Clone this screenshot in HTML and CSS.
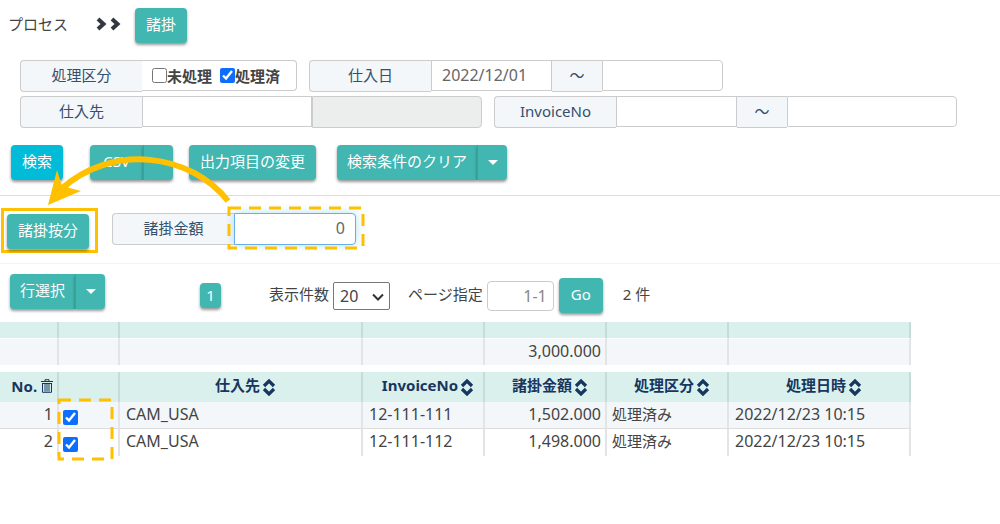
FILE: index.html
```html
<!DOCTYPE html>
<html lang="ja">
<head>
<meta charset="utf-8">
<title>諸掛</title>
<link rel="stylesheet" href="styles.css">
</head>
<body>
<svg class="defs" aria-hidden="true">
  <symbol id="sort" viewBox="0 0 14 18"><path d="M2 8 7 3 12 8M2 11 7 16 12 11" fill="none" stroke="currentColor" stroke-width="3.200"/></symbol>
  <symbol id="chevron" viewBox="0 0 12 14"><path d="M2 2 7.500 7 2 12" fill="none" stroke="currentColor" stroke-width="4"/></symbol>
</svg>

<header class="crumbs">
  <span>プロセス</span>
  <span class="chevrons"><svg><use href="#chevron"/></svg><svg><use href="#chevron"/></svg></span>
  <button class="btn" type="button">諸掛</button>
</header>

<form class="search">
  <div class="fields">
    <div class="group" role="group" aria-labelledby="kubun">
      <span class="tag" id="kubun">処理区分</span>
      <span class="checks">
        <label><input class="tick" type="checkbox">未処理</label>
        <label><input class="tick" type="checkbox" checked>処理済</label>
      </span>
    </div>
    <div class="group">
      <label class="tag" for="date-from">仕入日</label>
      <input class="box" id="date-from" type="text" value="2022/12/01">
      <span class="tilde">～</span>
      <input class="box last" type="text" aria-label="仕入日（終了）">
    </div>
  </div>
  <div class="fields">
    <div class="group">
      <label class="tag" for="supplier">仕入先</label>
      <input class="box wide" id="supplier" type="text">
      <input class="box wide last" type="text" aria-label="仕入先名" disabled>
    </div>
    <div class="group">
      <label class="tag" for="invoice-from">InvoiceNo</label>
      <input class="box" id="invoice-from" type="text">
      <span class="tilde">～</span>
      <input class="box wide last" type="text" aria-label="InvoiceNo（終了）">
    </div>
  </div>
  <div class="actions">
    <button class="btn search-btn" type="button">検索</button>
    <div class="split csv"><button class="btn" type="button">CSV</button><button class="btn toggle" type="button" aria-label="CSVメニュー"></button></div>
    <button class="btn columns" type="button">出力項目の変更</button>
    <div class="split"><button class="btn" type="button">検索条件のクリア</button><button class="btn toggle" type="button" aria-label="クリアメニュー"><span class="caret"></span></button></div>
  </div>
</form>

<section class="allocate">
  <svg class="arrow" viewBox="0 0 200 60" aria-hidden="true">
    <path d="M187 46C150-1 72-13 19 35" fill="none" stroke="#ffc000" stroke-width="6"/>
    <path d="M7 50 16 15 21 31 40 36Z" fill="#ffc000"/>
  </svg>
  <div class="outlined"><button class="btn" type="button">諸掛按分</button></div>
  <div class="group">
    <label class="tag" for="amount">諸掛金額</label>
    <span class="amount">
      <input class="box last" id="amount" type="text" value="0">
      <svg class="dash" aria-hidden="true"><rect x="1" y="1" width="134" height="40"/></svg>
    </span>
  </div>
</section>

<section class="pager">
  <div class="split"><button class="btn" type="button">行選択</button><button class="btn toggle" type="button" aria-label="行選択メニュー"><span class="caret"></span></button></div>
  <div class="paging">
    <button class="btn page" type="button">1</button>
    <label for="count">表示件数</label>
    <span class="select">
      <select id="count"><option>20</option></select>
      <svg viewBox="0 0 12 8"><path d="M1 1.500 6 6.500 11 1.500" fill="none" stroke="#333" stroke-width="2"/></svg>
    </span>
    <label for="jump">ページ指定</label>
    <input class="box last" id="jump" type="text" placeholder="1-1">
    <button class="btn go" type="button">Go</button>
    <span>2 件</span>
  </div>
</section>

<table class="grid sums">
  <colgroup><col class="c1"><col class="c2"><col class="c3"><col class="c4"><col class="c4"><col class="c4"><col class="c7"></colgroup>
  <thead><tr><th></th><th></th><th></th><th></th><th></th><th></th><th></th></tr></thead>
  <tbody><tr><td></td><td></td><td></td><td></td><td class="num">3,000.000</td><td></td><td></td></tr></tbody>
</table>

<div class="results">
  <table class="grid rows">
    <colgroup><col class="c1"><col class="c2"><col class="c3"><col class="c4"><col class="c4"><col class="c4"><col class="c7"></colgroup>
    <thead>
      <tr>
        <th class="num">No. <svg class="trash" viewBox="0 0 12 14"><path d="M0 2.500H12M4 2V.7H8V2M1.500 4V13.300H10.500V4M1.500 4.500H10.500M4 5V12.500M6 5V12.500M8 5V12.500" fill="none" stroke="currentColor" stroke-width="1"/></svg></th>
        <th></th>
        <th>仕入先<svg class="sort"><use href="#sort"/></svg></th>
        <th>InvoiceNo<svg class="sort"><use href="#sort"/></svg></th>
        <th>諸掛金額<svg class="sort"><use href="#sort"/></svg></th>
        <th>処理区分<svg class="sort"><use href="#sort"/></svg></th>
        <th>処理日時<svg class="sort"><use href="#sort"/></svg></th>
      </tr>
    </thead>
    <tbody>
      <tr>
        <td class="num">1</td>
        <td class="pick"><input class="tick" type="checkbox" aria-label="1行目" checked></td>
        <td>CAM_USA</td><td>12-111-111</td><td class="num">1,502.000</td><td class="ja">処理済み</td><td>2022/12/23 10:15</td>
      </tr>
      <tr>
        <td class="num">2</td>
        <td class="pick"><input class="tick" type="checkbox" aria-label="2行目" checked></td>
        <td>CAM_USA</td><td>12-111-112</td><td class="num">1,498.000</td><td class="ja">処理済み</td><td>2022/12/23 10:15</td>
      </tr>
    </tbody>
  </table>
  <svg class="dash" aria-hidden="true"><rect x="1" y="1" width="53" height="59"/></svg>
</div>
</body>
</html>
```
FILE: styles.css
```css
* { box-sizing: border-box; }
body {
  margin: 0;
  min-height: 100vh;
  padding-bottom: 20px;
  background: #fff;
  color: #444;
  font: 15px/20px "Noto Sans", "Noto Sans CJK JP", sans-serif;
}
button, input, select { font: inherit; color: inherit; margin: 0; }
.defs { position: absolute; width: 0; height: 0; }

.btn {
  height: 35px;
  padding: 0 11px 4px;
  border: 0;
  border-radius: 4px;
  background: #42b6b0;
  color: #fff;
  white-space: nowrap;
  box-shadow: 0 2px 3px rgba(0, 0, 0, .4);
}
.split { display: flex; }
.split .btn:first-child { padding: 0 10px 4px; border-radius: 4px 0 0 4px; }
.split .toggle { width: 30px; padding: 0 0 4px; border-left: 1px solid #38a49e; border-radius: 0 4px 4px 0; }
.caret {
  display: inline-block;
  border: 5px solid transparent;
  border-top-color: #fff;
  border-bottom: 0;
  vertical-align: middle;
}

.crumbs { display: flex; align-items: center; padding: 8px 8px 0; }
.crumbs > span { padding-bottom: 3px; }
.chevrons { display: flex; gap: 2px; margin: 0 13px 0 28px; color: #333840; }
.chevrons svg { width: 12px; height: 14px; }

.search { border-bottom: 1px solid #ddd; padding: 17px 0 15px; }
.fields { display: flex; flex-wrap: wrap; gap: 12px; padding: 0 20px; margin-bottom: 4px; }
.group { display: flex; height: 32px; }
.tag {
  width: 122px;
  padding: 4px 0;
  border: 1px solid #ccc;
  border-right: 0;
  border-radius: 4px 0 0 4px;
  background: #f3f7fa;
  color: #34506b;
  text-align: center;
}
.checks {
  display: flex;
  gap: 8px;
  width: 155px;
  height: 31px;
  padding-left: 10px;
  border: 1px solid #ccc;
  border-left: 0;
  border-radius: 0 4px 4px 0;
  font-weight: bold;
}
.checks label { display: flex; align-items: center; white-space: nowrap; }
.tick { width: 15px; height: 15px; accent-color: #0d6efd; }
.box {
  width: 121px;
  min-width: 0;
  height: 31px;
  padding: 0 10px 2px;
  border: 1px solid #ccc;
  background: #fff;
  color: #666;
  font-size: 16px;
}
.wide { width: 170px; }
.last { border-radius: 0 4px 4px 0; }
.box:disabled { height: 32px; background: #eceeee; }
.tilde {
  width: 50px;
  padding: 4px 0;
  border: 1px solid #ccc;
  border-width: 1px 0;
  background: #f3f7fa;
  color: #34506b;
  text-align: center;
}

.actions { display: flex; flex-wrap: wrap; padding: 13px 11px 0; }
.search-btn { margin-right: 27px; background: #00bcd8; }
.csv { margin-right: 16px; }
.csv .btn:first-child { width: 53px; }
.columns { margin-right: 21px; }

.allocate {
  position: relative;
  display: flex;
  align-items: center;
  gap: 14px;
  padding: 12px 1px 10px;
  border-bottom: 1px solid #f4f4f4;
}
.outlined { padding: 3px 6px 1px 3px; border: 3px solid #ffc000; line-height: 0; }
.allocate .group { margin-top: -3px; }
.amount { position: relative; display: flex; }
.amount .box { width: 122px; height: 32px; border-color: #66afe9; text-align: right; box-shadow: 0 0 8px rgba(102, 200, 233, .5); }
.dash { position: absolute; pointer-events: none; overflow: visible; }
.dash rect { fill: none; stroke: #ffc000; stroke-width: 3; stroke-dasharray: 12 8; }
.amount .dash { left: -6px; top: -6px; width: 136px; height: 42px; }
.arrow { position: absolute; z-index: 1; left: 41px; top: -41px; width: 200px; height: 60px; pointer-events: none; }

.pager { display: flex; align-items: flex-start; padding: 10px 10px 9px; }
.paging { display: flex; align-items: center; padding-top: 4px; margin-left: 95px; }
.page { width: 21px; height: 25px; padding: 0 0 2px; margin-right: 48px; }
.paging label, .paging > span { padding-bottom: 3px; }
.paging .select { padding: 0; }
.select { position: relative; margin: 0 18px 0 4px; }
.select select {
  display: block;
  width: 57px;
  height: 28px;
  padding: 0 6px;
  border: 1px solid #777;
  border-radius: 2px;
  background: #fff;
  appearance: none;
  font-size: 16px;
}
.select svg { position: absolute; right: 6px; top: 11px; width: 12px; height: 8px; pointer-events: none; }
.paging .box { width: 67px; height: 30px; margin: 0 5px 0 4px; padding: 0 6px; border-radius: 4px; text-align: right; }
.box::placeholder { color: #888; opacity: 1; }
.go { width: 44px; margin-right: 20px; }

.grid { width: 911px; table-layout: fixed; border-collapse: separate; border-spacing: 0; font-size: 16px; }
.c1 { width: 59px; }
.c2 { width: 61px; }
.c3 { width: 243px; }
.c4 { width: 122px; }
.c7 { width: 182px; }
.grid th { border-right: 2px solid #c6dcd9; background: #d9f0ed; color: #17365d; font-size: 15px; }
.grid td, .grid th { white-space: nowrap; }
.grid td { border-right: 2px solid #e2e4e5; }
.grid th { padding: 0 2px 3px 12px; }
.grid td { padding: 0 5px 3px 6px; }
.grid .num { padding-left: 0; padding-right: 4px; text-align: right; }
.grid .ja { padding-left: 5px; font-size: 15px; }
.sums { margin-bottom: 7px; }
.sums th { height: 17px; border-bottom: 1px solid #fff; }
.sums td { height: 26px; background: #f3f7fa; }
.rows th { height: 30px; }
.rows td { height: 27px; }
.rows tbody tr:first-child td { background: #f3f7fa; border-bottom: 1px solid #ddd; }
.sort { width: 14px; height: 18px; margin-left: 2px; vertical-align: middle; }
.trash { width: 12px; height: 14px; vertical-align: -1px; }
.grid .pick { padding: 4px 4px 0; line-height: 0; }
.results { position: relative; }
.results .dash { left: 58px; top: 27px; width: 55px; height: 61px; }
```
